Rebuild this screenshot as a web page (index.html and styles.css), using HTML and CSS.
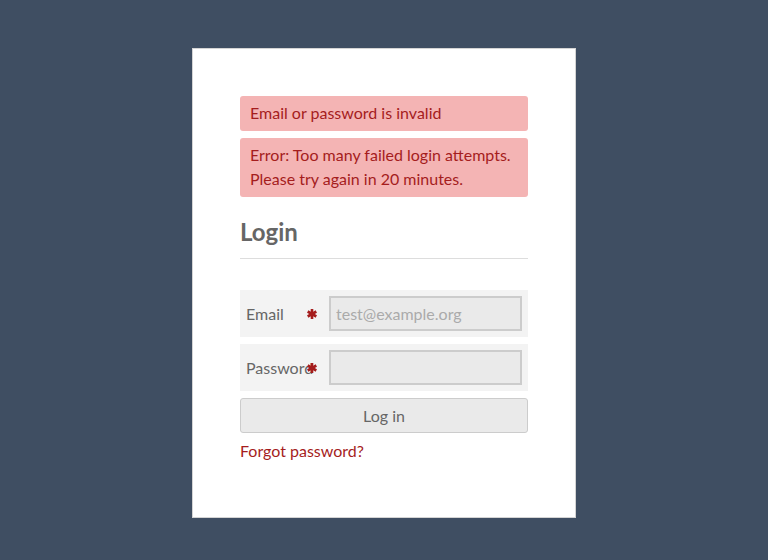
FILE: index.html
```html
<!DOCTYPE html>
<html>
<head>
<meta charset="utf-8">
<link rel="stylesheet" href="styles.css">
</head>
<body>
<div class="page">
  <div class="card">
    <div class="alert">Email or password is invalid</div>
    <div class="alert">Error: Too many failed login attempts. Please try again in 20 minutes.</div>
    <h1 class="title">Login</h1>
    <form class="form">
      <div class="row">
        <label class="label">Email</label>
        <span class="req"><svg viewBox="0 0 10 10" width="10" height="10"><g stroke="#a51d1d" stroke-width="2.6" stroke-linecap="butt"><line x1="5" y1="0" x2="5" y2="10"/><line x1="0.67" y1="2.5" x2="9.33" y2="7.5"/><line x1="0.67" y1="7.5" x2="9.33" y2="2.5"/></g></svg></span>
        <input class="input" type="text" placeholder="test@example.org">
      </div>
      <div class="row">
        <label class="label">Password</label>
        <span class="req"><svg viewBox="0 0 10 10" width="10" height="10"><g stroke="#a51d1d" stroke-width="2.6" stroke-linecap="butt"><line x1="5" y1="0" x2="5" y2="10"/><line x1="0.67" y1="2.5" x2="9.33" y2="7.5"/><line x1="0.67" y1="7.5" x2="9.33" y2="2.5"/></g></svg></span>
        <input class="input" type="password">
      </div>
      <button class="btn" type="button">Log in</button>
    </form>
    <a class="forgot" href="#">Forgot password?</a>
  </div>
</div>
</body>
</html>
```

FILE: styles.css
```css
html, body {
  margin: 0;
  padding: 0;
  height: 100%;
}
body {
  background: #3f4e62;
  font-family: Lato, "Open Sans", sans-serif;
}
.page {
  padding-top: 48px;
  display: flex;
  justify-content: center;
}
.card {
  box-sizing: border-box;
  width: 384px;
  height: 470px;
  background: #fff;
  border: 1px solid #d4d4d4;
  padding: 47px 47px;
}
.alert {
  background: #f4b4b4;
  color: #a51d1d;
  font-size: 16px;
  line-height: 24px;
  padding: 5px 10px 6px;
  border-radius: 3px;
  margin-bottom: 7px;
}
.title {
  margin: 20px 0 0;
  font-size: 24px;
  line-height: 30px;
  font-weight: 700;
  color: #666;
  padding-bottom: 11px;
  border-bottom: 1px solid #ddd;
}
.form {
  margin-top: 31px;
}
.row {
  display: grid;
  grid-template-columns: 60px 23px 1fr;
  align-items: center;
  background: #f3f3f3;
  padding: 6px;
  margin-bottom: 7px;
}
.label {
  font-size: 16px;
  color: #666;
  white-space: nowrap;
  grid-column: 1;
  grid-row: 1;
}
.req {
  grid-column: 2;
  grid-row: 1;
  display: flex;
  align-items: center;
  padding-left: 1px;
  position: relative;
}
.req svg { display: block; }
.input {
  grid-column: 3;
  grid-row: 1;
  box-sizing: border-box;
  width: 100%;
  height: 35px;
  border: 2px solid #ccc;
  background: #eaeaea;
  font-family: Lato, sans-serif;
  font-size: 16px;
  color: #555;
  padding: 0 5px;
  outline: none;
}
.input::placeholder { color: #aaa; }
.btn {
  display: block;
  box-sizing: border-box;
  width: 100%;
  height: 35px;
  border: 1px solid #ccc;
  border-radius: 3px;
  background: #eaeaea;
  font-family: Lato, sans-serif;
  font-size: 16px;
  color: #666;
  padding: 0;
}
.forgot {
  display: inline-block;
  margin-top: 6px;
  color: #a51d1d;
  font-size: 16px;
  line-height: 24px;
  text-decoration: none;
}
```
